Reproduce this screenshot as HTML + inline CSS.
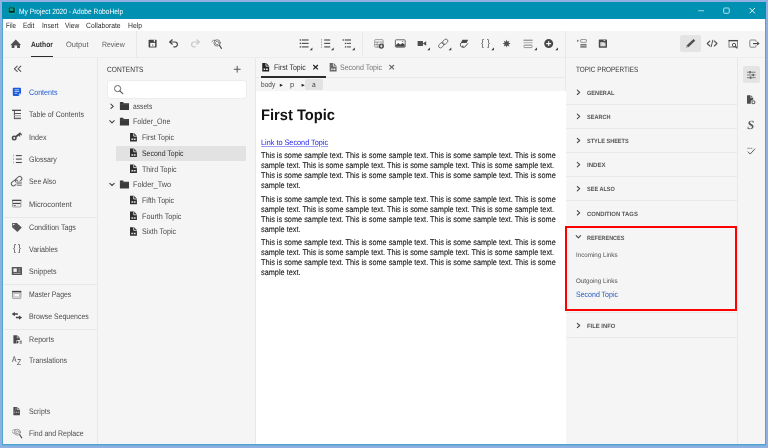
<!DOCTYPE html>
<html lang="en"><head><meta charset="utf-8"><title>My Project 2020 - Adobe RoboHelp</title>
<style>
html,body{margin:0;padding:0;}
body{width:768px;height:448px;overflow:hidden;background:#8fb0e2;font-family:"Liberation Sans",sans-serif;font-size:8px;color:#4b4b4b;position:relative;text-rendering:geometricPrecision;}
div,span,a{position:absolute;white-space:nowrap;}
#win{left:2px;top:2px;width:764px;height:443px;background:#4ea5cd;border-bottom:1px solid #70aad8;}
#title{left:2px;top:2px;width:764px;height:17px;background:#0090b2;}
#menu{left:3px;top:19px;width:762px;height:12px;background:#fff;}
#tool{left:3px;top:31px;width:762px;height:26px;background:#f5f5f5;}
#main{left:3px;top:57px;width:762px;height:387px;background:#f5f5f5;}
.vl{background:#e8e8e8;width:1px;}
.hl{background:#e9e9e9;height:1px;}
svg{position:absolute;overflow:visible;}
#ed{left:256.3px;top:91.3px;width:310px;height:352.7px;background:#fff;}
.p{white-space:nowrap;font-size:8.2px;line-height:10px;color:#141414;transform-origin:0 0;-webkit-text-stroke:0.1px #141414;}
#app{left:0;top:0;width:768px;height:448px;background:#8fb0e2;will-change:transform;}
</style></head><body>
<div id="app">
<div id="win"></div>
<div id="title"></div>
<div id="menu"></div>
<div id="tool"></div>
<div id="main"></div>

<span style="left:18.90px;top:6.75px;font-size:7.7px;line-height:10px;color:#ffffff;transform:scaleX(0.8641);transform-origin:0 0;">My Project 2020 - Adobe RoboHelp</span>
<span style="left:6.00px;top:20.75px;font-size:7.6px;line-height:10px;color:#2a2a2a;transform:scaleX(0.8165);transform-origin:0 0;">File</span>
<span style="left:23.00px;top:20.75px;font-size:7.6px;line-height:10px;color:#2a2a2a;transform:scaleX(0.8552);transform-origin:0 0;">Edit</span>
<span style="left:41.50px;top:20.75px;font-size:7.6px;line-height:10px;color:#2a2a2a;transform:scaleX(0.8681);transform-origin:0 0;">Insert</span>
<span style="left:65.00px;top:20.75px;font-size:7.6px;line-height:10px;color:#2a2a2a;transform:scaleX(0.8692);transform-origin:0 0;">View</span>
<span style="left:86.20px;top:20.75px;font-size:7.6px;line-height:10px;color:#2a2a2a;transform:scaleX(0.8902);transform-origin:0 0;">Collaborate</span>
<span style="left:127.80px;top:20.75px;font-size:7.6px;line-height:10px;color:#2a2a2a;transform:scaleX(0.8957);transform-origin:0 0;">Help</span>
<span style="left:31.00px;top:39.75px;font-size:7.8px;line-height:10px;color:#2c2c2c;transform:scaleX(0.8529);transform-origin:0 0;font-weight:bold;">Author</span>
<div style="left:31px;top:55.7px;width:21.6px;height:1.4px;background:#2c2c2c"></div>
<span style="left:66.20px;top:39.75px;font-size:7.8px;line-height:10px;color:#606060;transform:scaleX(0.9609);transform-origin:0 0;">Output</span>
<span style="left:102.30px;top:39.75px;font-size:7.8px;line-height:10px;color:#606060;transform:scaleX(0.8876);transform-origin:0 0;">Review</span>
<div class="vl" style="left:136px;top:31px;height:26px"></div>
<div class="vl" style="left:362px;top:33px;height:22px"></div>
<div class="vl" style="left:565.3px;top:31px;height:413px"></div>
<div style="left:680px;top:35px;width:20.8px;height:17.2px;background:#e4e4e4;border-radius:2px"></div>

<div class="vl" style="left:97.3px;top:57px;height:387px"></div>
<div class="vl" style="left:255.3px;top:57px;height:387px"></div>
<div class="vl" style="left:737.2px;top:57px;height:387px"></div>
<div class="hl" style="left:256.3px;top:77.3px;width:309px"></div>
<div class="hl" style="left:3px;top:57px;width:762px;background:#ececec"></div>

<span style="left:28.60px;top:87.75px;font-size:8px;line-height:10px;color:#1c5ad0;transform:scaleX(0.8932);transform-origin:0 0;">Contents</span>
<span style="left:28.60px;top:109.75px;font-size:8px;line-height:10px;color:#4c4c4c;transform:scaleX(0.8834);transform-origin:0 0;">Table of Contents</span>
<span style="left:28.60px;top:132.75px;font-size:8px;line-height:10px;color:#4c4c4c;transform:scaleX(0.8942);transform-origin:0 0;">Index</span>
<span style="left:28.60px;top:154.75px;font-size:8px;line-height:10px;color:#4c4c4c;transform:scaleX(0.8808);transform-origin:0 0;">Glossary</span>
<span style="left:28.60px;top:176.75px;font-size:8px;line-height:10px;color:#4c4c4c;transform:scaleX(0.8582);transform-origin:0 0;">See Also</span>
<span style="left:28.60px;top:199.75px;font-size:8px;line-height:10px;color:#4c4c4c;transform:scaleX(0.9345);transform-origin:0 0;">Microcontent</span>
<span style="left:28.60px;top:222.75px;font-size:8px;line-height:10px;color:#4c4c4c;transform:scaleX(0.8886);transform-origin:0 0;">Condition Tags</span>
<span style="left:28.60px;top:244.75px;font-size:8px;line-height:10px;color:#4c4c4c;transform:scaleX(0.8822);transform-origin:0 0;">Variables</span>
<span style="left:28.60px;top:266.75px;font-size:8px;line-height:10px;color:#4c4c4c;transform:scaleX(0.8865);transform-origin:0 0;">Snippets</span>
<span style="left:28.60px;top:289.75px;font-size:8px;line-height:10px;color:#4c4c4c;transform:scaleX(0.8550);transform-origin:0 0;">Master Pages</span>
<span style="left:28.60px;top:311.75px;font-size:8px;line-height:10px;color:#4c4c4c;transform:scaleX(0.8661);transform-origin:0 0;">Browse Sequences</span>
<span style="left:28.60px;top:334.75px;font-size:8px;line-height:10px;color:#4c4c4c;transform:scaleX(0.8925);transform-origin:0 0;">Reports</span>
<span style="left:28.60px;top:355.75px;font-size:8px;line-height:10px;color:#4c4c4c;transform:scaleX(0.8803);transform-origin:0 0;">Translations</span>
<span style="left:28.60px;top:406.75px;font-size:8px;line-height:10px;color:#4c4c4c;transform:scaleX(0.8630);transform-origin:0 0;">Scripts</span>
<span style="left:28.60px;top:428.75px;font-size:8px;line-height:10px;color:#4c4c4c;transform:scaleX(0.8707);transform-origin:0 0;">Find and Replace</span>
<div class="hl" style="left:3px;top:217.2px;width:94px"></div>
<div class="hl" style="left:3px;top:284.2px;width:94px"></div>
<div class="hl" style="left:3px;top:329px;width:94px"></div>
<span style="left:107.40px;top:64.75px;font-size:7.7px;line-height:10px;color:#333;transform:scaleX(0.8595);transform-origin:0 0;">CONTENTS</span>
<div style="left:107.5px;top:81px;width:138px;height:17px;background:#fff;border-radius:2.5px;box-shadow:0 0 0 0.6px #e6e6e6"></div>
<div style="left:116px;top:146.3px;width:129.6px;height:14.8px;background:#e2e2e2"></div>

<span style="left:133.00px;top:101.75px;font-size:8px;line-height:10px;color:#484848;transform:scaleX(0.8347);transform-origin:0 0;">assets</span>
<span style="left:133.00px;top:116.75px;font-size:8px;line-height:10px;color:#484848;transform:scaleX(0.8876);transform-origin:0 0;">Folder_One</span>
<span style="left:142.40px;top:132.75px;font-size:8px;line-height:10px;color:#484848;transform:scaleX(0.8787);transform-origin:0 0;">First Topic</span>
<span style="left:142.40px;top:148.75px;font-size:8px;line-height:10px;color:#2c2c2c;transform:scaleX(0.8666);transform-origin:0 0;">Second Topic</span>
<span style="left:142.40px;top:164.75px;font-size:8px;line-height:10px;color:#484848;transform:scaleX(0.8876);transform-origin:0 0;">Third Topic</span>
<span style="left:133.00px;top:179.75px;font-size:8px;line-height:10px;color:#484848;transform:scaleX(0.9091);transform-origin:0 0;">Folder_Two</span>
<span style="left:142.40px;top:195.75px;font-size:8px;line-height:10px;color:#484848;transform:scaleX(0.8840);transform-origin:0 0;">Fifth Topic</span>
<span style="left:142.40px;top:211.75px;font-size:8px;line-height:10px;color:#484848;transform:scaleX(0.8980);transform-origin:0 0;">Fourth Topic</span>
<span style="left:142.40px;top:226.75px;font-size:8px;line-height:10px;color:#484848;transform:scaleX(0.8822);transform-origin:0 0;">Sixth Topic</span>
<span style="left:273.50px;top:62.75px;font-size:8px;line-height:10px;color:#2c2c2c;transform:scaleX(0.8731);transform-origin:0 0;">First Topic</span>
<div style="left:260.8px;top:76px;width:65.2px;height:1.6px;background:#2c2c2c"></div>
<span style="left:339.60px;top:62.75px;font-size:8px;line-height:10px;color:#777777;transform:scaleX(0.8791);transform-origin:0 0;">Second Topic</span>
<div style="left:305.2px;top:79px;width:17.7px;height:11.4px;background:#e2e2e2;border-radius:2px"></div>
<span style="left:260.80px;top:79.75px;font-size:7.6px;line-height:10px;color:#444;transform:scaleX(0.8616);transform-origin:0 0;">body</span>
<span style="left:290.20px;top:79.75px;font-size:7.6px;line-height:10px;color:#444;transform:scaleX(0.9936);transform-origin:0 0;">p</span>
<span style="left:312.30px;top:79.75px;font-size:7.6px;line-height:10px;color:#444;transform:scaleX(0.8753);transform-origin:0 0;">a</span>
<div id="ed"></div>
<span style="left:261.00px;top:110.75px;font-size:15.4px;line-height:10px;color:#111;transform:scaleX(0.9539);transform-origin:0 0;font-weight:bold;">First Topic</span>
<a style="left:260.80px;top:137.75px;font-size:7.8px;line-height:10px;color:#1a1ae8;transform:scaleX(0.9340);transform-origin:0 0;text-decoration:underline;text-decoration-color:rgba(60,60,240,0.5);">Link to Second Topic</a>
<div class="p" style="left:260.8px;top:150.75px;transform:scaleX(0.8947)">This is some sample text. This is some sample text. This is some sample text. This is some<br>sample text. This is some sample text. This is some sample text. This is some sample text.<br>This is some sample text. This is some sample text. This is some sample text. This is some<br>sample text.</div>
<div class="p" style="left:260.8px;top:194.75px;transform:scaleX(0.8947)">This is some sample text. This is some sample text. This is some sample text. This is some<br>sample text. This is some sample text. This is some sample text. This is some sample text.<br>This is some sample text. This is some sample text. This is some sample text. This is some<br>sample text.</div>
<div class="p" style="left:260.8px;top:237.75px;transform:scaleX(0.8947)">This is some sample text. This is some sample text. This is some sample text. This is some<br>sample text. This is some sample text. This is some sample text. This is some sample text.<br>This is some sample text. This is some sample text. This is some sample text. This is some<br>sample text.</div>
<span style="left:575.70px;top:64.75px;font-size:7.7px;line-height:10px;color:#333;transform:scaleX(0.8304);transform-origin:0 0;">TOPIC PROPERTIES</span>
<span style="left:586.80px;top:88.75px;font-size:6.1px;line-height:10px;color:#555;transform:scaleX(0.9187);transform-origin:0 0;font-weight:bold;">GENERAL</span>
<span style="left:586.80px;top:112.75px;font-size:6.1px;line-height:10px;color:#555;transform:scaleX(0.9162);transform-origin:0 0;font-weight:bold;">SEARCH</span>
<span style="left:586.80px;top:136.75px;font-size:6.1px;line-height:10px;color:#555;transform:scaleX(0.9113);transform-origin:0 0;font-weight:bold;">STYLE SHEETS</span>
<span style="left:586.80px;top:160.75px;font-size:6.1px;line-height:10px;color:#555;transform:scaleX(1.0031);transform-origin:0 0;font-weight:bold;">INDEX</span>
<span style="left:586.80px;top:184.75px;font-size:6.1px;line-height:10px;color:#555;transform:scaleX(0.9112);transform-origin:0 0;font-weight:bold;">SEE ALSO</span>
<span style="left:586.80px;top:209.75px;font-size:6.1px;line-height:10px;color:#555;transform:scaleX(0.9711);transform-origin:0 0;font-weight:bold;">CONDITION TAGS</span>
<span style="left:586.80px;top:233.75px;font-size:6.1px;line-height:10px;color:#555;transform:scaleX(0.8971);transform-origin:0 0;font-weight:bold;">REFERENCES</span>
<span style="left:586.80px;top:321.75px;font-size:6.1px;line-height:10px;color:#555;transform:scaleX(0.9599);transform-origin:0 0;font-weight:bold;">FILE INFO</span>
<div class="hl" style="left:566.3px;top:104.3px;width:171px"></div>
<div class="hl" style="left:566.3px;top:128.3px;width:171px"></div>
<div class="hl" style="left:566.3px;top:152.3px;width:171px"></div>
<div class="hl" style="left:566.3px;top:176.3px;width:171px"></div>
<div class="hl" style="left:566.3px;top:200.4px;width:171px"></div>
<div class="hl" style="left:566.3px;top:312.2px;width:171px"></div>
<div class="hl" style="left:566.3px;top:336.6px;width:171px"></div>
<span style="left:575.70px;top:250.75px;font-size:6.5px;line-height:10px;color:#505050;transform:scaleX(0.9572);transform-origin:0 0;">Incoming Links</span>
<span style="left:575.70px;top:276.75px;font-size:6.5px;line-height:10px;color:#505050;transform:scaleX(0.9571);transform-origin:0 0;">Outgoing Links</span>
<span style="left:575.70px;top:289.75px;font-size:7.8px;line-height:10px;color:#2257c2;transform:scaleX(0.8995);transform-origin:0 0;">Second Topic</span>
<div style="left:565.3px;top:225.5px;width:167.7px;height:81.5px;border:2px solid #ff0000"></div>
<div style="left:742.8px;top:66.3px;width:16.8px;height:16.7px;background:#e4e4e4;border-radius:2px"></div>

<svg style="left:0;top:0" width="768" height="448" viewBox="0 0 768 448" fill="none">
<rect x="7.9" y="6.9" width="7.6" height="6.6" rx="1.2" fill="#0bb5a3"/><rect x="8.7" y="7.6" width="6" height="5.2" rx="0.5" fill="#012a27"/><rect x="9.6" y="8.3" width="3.8" height="2.5" fill="#17a595"/>
<path d="M698.2 10.7h5.9" stroke="#8fd3e2" stroke-width="1.1"/><rect x="723.7" y="8" width="5.5" height="5.3" rx="0.7" stroke="#b4e2ed" stroke-width="1"/><path d="M749.6 8l5.3 5.3M754.9 8l-5.3 5.3" stroke="#f2fbfd" stroke-width="1"/>
<path d="M15.75 39.4L21 44.9H19.9V48H17.1V45.5H14.4V48H11.7V44.9H10.5Z" fill="#4f4f4f"/>
<rect x="148.6" y="39.8" width="8" height="7.7" rx="0.7" fill="#444"/><rect x="150.2" y="42.9" width="4.9" height="3.7" fill="#f5f5f5"/><rect x="153.8" y="39.6" width="1.2" height="2.1" fill="#f5f5f5"/><rect x="152" y="44.4" width="1.3" height="2.2" fill="#999"/>
<g stroke="#444" stroke-width="1.2" stroke-linecap="round" stroke-linejoin="round"><path d="M170 42H175a2.4 2.4 0 0 1 0 4.8H173.8"/><path d="M172.2 39.8L169.8 42L172.2 44.2" /></g>
<g stroke="#c8c8c8" stroke-width="1.2" stroke-linecap="round" stroke-linejoin="round"><path d="M199 42H194a2.4 2.4 0 0 0 0 4.8H195.2"/><path d="M196.8 39.8L199.2 42L196.8 44.2" /></g>
<g stroke="#6a6a6a" stroke-width="0.8" stroke-linecap="round"><circle cx="217.1" cy="42.9" r="3.2"/><path d="M219.5 45.4L221.4 48.4" stroke-width="1.15" stroke="#505050"/><path d="M215.3 43.8a1.9 1.9 0 0 1 3.3-1.8M218.9 42.2a1.9 1.9 0 0 1-3.2 1.9" stroke-width="0.8"/><path d="M212 41.5l1.5-1.3 1.8 0.3" stroke-width="0.8"/></g>
<rect x="299.7" y="39.35" width="1.3" height="1.3" fill="#444"/><rect x="301.7" y="39.4" width="6.9" height="1.2" fill="#555"/>
<rect x="324.2" y="39.4" width="6" height="1.2" fill="#555"/>
<rect x="299.7" y="42.75" width="1.3" height="1.3" fill="#444"/><rect x="301.7" y="42.8" width="6.9" height="1.2" fill="#555"/>
<rect x="324.2" y="42.8" width="6" height="1.2" fill="#555"/>
<rect x="299.7" y="46.25" width="1.3" height="1.3" fill="#444"/><rect x="301.7" y="46.3" width="6.9" height="1.2" fill="#555"/>
<rect x="324.2" y="46.3" width="6" height="1.2" fill="#555"/>
<path d="M321.5 39V48" stroke="#999" stroke-width="0.8" stroke-dasharray="1.6 0.9"/>
<rect x="342.6" y="39.35" width="1.3" height="1.3" fill="#444"/><rect x="344.7" y="39.4" width="6.3" height="1.2" fill="#555"/>
<rect x="344.9" y="42.75" width="1.3" height="1.3" fill="#444"/><rect x="346.9" y="42.8" width="4.1" height="1.2" fill="#666"/>
<rect x="344.9" y="46.25" width="1.3" height="1.3" fill="#444"/><rect x="346.9" y="46.3" width="4.1" height="1.2" fill="#666"/>
<path d="M312.4 50.2H309.7L312.4 47.5Z" fill="#3c3c3c"/>
<path d="M333.7 50.2H331.0L333.7 47.5Z" fill="#3c3c3c"/>
<path d="M354.8 50.2H352.1L354.8 47.5Z" fill="#3c3c3c"/>
<g stroke="#8a8a8a" stroke-width="0.8"><rect x="374.7" y="39.6" width="8.4" height="7.6" rx="0.8"/><path d="M374.7 42.1H383M377.2 42.1V47.2M374.7 44.6H379"/></g><circle cx="381.3" cy="46.1" r="2.6" fill="#444"/><path d="M379.9 46.1h2.8M381.3 44.7v2.8" stroke="#fff" stroke-width="0.8"/>
<rect x="395.4" y="39.8" width="9.8" height="7.4" rx="0.7" stroke="#505050" stroke-width="0.85" fill="#fbfbfb"/><path d="M395.9 46.7V44.9L398.3 42.9L400.2 44.6L402.6 43L404.7 44.4V46.7Z" fill="#484848"/><rect x="402.2" y="41" width="1.2" height="0.9" fill="#666"/>
<rect x="417.6" y="41" width="5.4" height="5" rx="0.5" fill="#4f4f4f"/><path d="M422.8 43.5L426.2 41.3V45.7Z" fill="#4f4f4f"/>
<path d="M430 50.2H427.3L430 47.5Z" fill="#3c3c3c"/>
<g stroke="#6c6c6c" stroke-width="0.9" transform="rotate(-42 443.2 43.5)"><rect x="437.6" y="41.6" width="6.2" height="3.8" rx="1.9"/><rect x="442.6" y="41.6" width="6.2" height="3.8" rx="1.9"/></g>
<path d="M451.3 50.2H448.6L451.3 47.5Z" fill="#3c3c3c"/>
<path d="M462.4 39.8H468.2L466.6 43H460.7Z" fill="#4a4a4a"/><path d="M460.9 43C459.8 45 460.6 47.2 462.6 47.2H464.6L468 43.4" stroke="#4a4a4a" stroke-width="1" stroke-linejoin="round"/><path d="M462.8 47.2V45.6" stroke="#4a4a4a" stroke-width="0.9"/>
<path d="M494 50.2H491.3L494 47.5Z" fill="#3c3c3c"/>
<polygon points="506.60,39.60 507.40,41.66 509.43,40.77 508.54,42.80 510.60,43.60 508.54,44.40 509.43,46.43 507.40,45.54 506.60,47.60 505.80,45.54 503.77,46.43 504.66,44.40 502.60,43.60 504.66,42.80 503.77,40.77 505.80,41.66" fill="#4f4f4f"/>
<rect x="523.5" y="39.7" width="9.1" height="1" fill="#777"/><rect x="523.5" y="42.1" width="9.1" height="0.8" fill="#aaa"/><rect x="523.5" y="43.4" width="9.1" height="1.6" fill="#e0e0e0"/><rect x="523.9" y="45.3" width="8.3" height="2.3" rx="1" stroke="#777" stroke-width="0.8" fill="#fff"/>
<path d="M537 50.2H534.3L537 47.5Z" fill="#3c3c3c"/>
<circle cx="548.7" cy="43.6" r="4.5" fill="#484848"/><path d="M546.3 43.6h4.8M548.7 41.2v4.8" stroke="#fff" stroke-width="1.1"/>
<path d="M558 50.2H555.3L558 47.5Z" fill="#3c3c3c"/>
<path d="M577.2 39.5L578.9 40.7L577.2 42Z" fill="#555"/><rect x="580.7" y="39.6" width="5.6" height="2.7" rx="0.3" stroke="#777" stroke-width="0.8" fill="#fff"/><rect x="580.3" y="44.1" width="6.3" height="1.4" fill="#666"/><rect x="580.3" y="46.2" width="6.3" height="1.4" fill="#666"/>
<rect x="598.8" y="39.4" width="8.2" height="8.3" rx="0.6" fill="#4a4a4a"/><rect x="600.3" y="42.2" width="5.3" height="4.1" fill="#dcdcdc"/><rect x="603.6" y="40" width="1.6" height="0.9" fill="#ddd"/><path d="M604 42.2h1.6v1.6z" fill="#4a4a4a"/>
<g transform="rotate(-43 690.4 43.6)"><rect x="686.4" y="42.35" width="9.4" height="2.5" fill="#4f4f4f"/><path d="M686.4 42.35L684.3 43.6L686.4 44.85Z" fill="#9a9a9a"/></g>
<g stroke="#555" stroke-width="1.1" stroke-linecap="round" stroke-linejoin="round"><path d="M709.9 41L707.2 43.5L709.9 46"/><path d="M714.3 41L717 43.5L714.3 46"/><path d="M712.8 40.2L711.2 46.7" stroke-width="1"/></g>
<rect x="729" y="40.4" width="8.4" height="6.7" stroke="#777" stroke-width="0.9"/><rect x="728.6" y="40" width="9.2" height="1.3" fill="#444"/><circle cx="734" cy="45" r="1.7" stroke="#444" stroke-width="0.9" fill="#f5f5f5"/><path d="M735.3 46.3L737.3 48.4" stroke="#444" stroke-width="1.1"/>
<path d="M756 42V40.9Q756 40 755.1 40H750.7Q749.8 40 749.8 40.9V46.3Q749.8 47.2 750.7 47.2H755.1Q756 47.2 756 46.3V45.2" stroke="#7a7a7a" stroke-width="0.9"/><path d="M753 43.6H758" stroke="#444" stroke-width="1.1"/><path d="M757.2 41.6L759.6 43.6L757.2 45.6Z" fill="#444"/>
<g stroke="#555" stroke-width="1.1" stroke-linecap="round" stroke-linejoin="round"><path d="M17.2 66.2L14.4 68.8L17.2 71.4"/><path d="M20.8 66.2L18 68.8L20.8 71.4"/></g>
<path d="M13.6 87.8H20.2Q21 87.8 21 88.6V93.6L18.8 95.9H13.6Q12.8 95.9 12.8 95.1V88.6Q12.8 87.8 13.6 87.8Z" fill="#1b5bd8"/><path d="M14.6 89.8h4.6M14.6 91.5h4.6M14.6 93.3h2.6" stroke="#cfe0ff" stroke-width="0.8"/><path d="M18.8 95.9V94.2Q18.8 93.6 19.4 93.6H21Z" fill="#cfe0ff"/>
<g><rect x="12.1" y="109.7" width="8.9" height="1.2" fill="#3c3c3c"/><rect x="13.9" y="110" width="0.9" height="9.1" fill="#444"/><rect x="14.3" y="113" width="6.7" height="0.9" fill="#444"/><rect x="14.3" y="115.3" width="6.7" height="0.7" fill="#999"/><rect x="14.3" y="116.8" width="6.7" height="0.7" fill="#999"/><rect x="14.3" y="118.2" width="6.7" height="0.9" fill="#444"/></g>
<g><circle cx="14.2" cy="138.1" r="1.75" stroke="#4a4a4a" stroke-width="1.5"/><path d="M15.8 136.7L20.7 133" stroke="#4a4a4a" stroke-width="1.8"/><path d="M18.9 134.8l1.2 1.5M20.4 133.6l1.3 1.6" stroke="#4a4a4a" stroke-width="1.1"/></g>
<rect x="15.9" y="155.04999999999998" width="5.9" height="1.1" fill="#4a4a4a"/><rect x="13" y="154.7" width="0.9" height="1.8" fill="#aaa"/>
<rect x="15.9" y="158.54999999999998" width="5.9" height="1.1" fill="#4a4a4a"/><rect x="13" y="158.2" width="0.9" height="1.8" fill="#aaa"/>
<rect x="15.9" y="161.95" width="5.9" height="1.1" fill="#4a4a4a"/><rect x="13" y="161.6" width="0.9" height="1.8" fill="#aaa"/>
<g stroke="#606060" stroke-width="1" transform="rotate(-40 16.6 181.2)"><rect x="10.4" y="179.1" width="7.2" height="4.2" rx="2.1"/><rect x="15.6" y="179.1" width="7.2" height="4.2" rx="2.1"/></g>
<rect x="16.4" y="181.3" width="5.8" height="4.6" fill="#f5f5f5"/>
<rect x="16.8" y="181.75" width="5" height="0.9" fill="#777"/>
<rect x="16.8" y="183.35000000000002" width="5" height="0.9" fill="#777"/>
<rect x="16.8" y="184.85000000000002" width="5" height="0.9" fill="#777"/>
<rect x="12.5" y="200.2" width="8.4" height="6.8" rx="0.6" stroke="#8a8a8a" stroke-width="0.8" fill="#ececec"/><rect x="12.1" y="199.8" width="9.2" height="1.3" fill="#4a4a4a"/><rect x="13" y="201.2" width="7.4" height="1.4" fill="#fafafa"/><rect x="13" y="202.8" width="7.4" height="1.2" fill="#4a4a4a"/><rect x="13.6" y="205.1" width="2.2" height="0.8" fill="#555"/>
<path d="M12.1 222.9H16.8L21.8 227.6L17.4 232L12.1 227.2Z" fill="#555"/><circle cx="13.8" cy="224.5" r="0.8" fill="#f5f5f5"/>
<rect x="11.8" y="267" width="10.2" height="8" rx="0.6" fill="#555"/><rect x="13.4" y="268.4" width="3.4" height="3.5" fill="#f2f2f2"/><path d="M18.4 268.8h2M18.4 270.2h2M18.4 271.6h2" stroke="#aaa" stroke-width="0.7"/><path d="M13.4 273.4h7.2" stroke="#bbb" stroke-width="0.8"/>
<rect x="12.5" y="291.4" width="8.4" height="7" rx="0.5" stroke="#8a8a8a" stroke-width="0.8" fill="#f0f0f0"/><rect x="12.1" y="290.9" width="9.2" height="1.5" fill="#444"/><rect x="13.9" y="293.6" width="5.6" height="3.3" stroke="#aaa" stroke-width="0.7" fill="#fafafa"/>
<path d="M11.7 314.1L14.8 311.9V313.35H17.9V314.85H14.8V316.3Z" fill="#444"/><path d="M22.1 317.6L19 315.4V316.85H15.9V318.35H19V319.8Z" fill="#444"/>
<path d="M13.4 335.2H17.3L19.9 337.8V343.6H13.4Z" fill="#4a4a4a"/><path d="M17.3 335.2V337.8H19.9" stroke="#f5f5f5" stroke-width="0.6"/><rect x="16.6" y="340" width="5.6" height="4.2" fill="#f5f5f5"/><path d="M17 340.4l2 1.7l-2 1.7z" fill="#444"/><path d="M19.6 341.2h2.3M19.6 343h2.3" stroke="#444" stroke-width="0.9"/>
<path d="M13.4 406.9H17.3L19.9 409.5V415.3H13.4Z" fill="#4a4a4a"/><path d="M17.3 406.9V409.5H19.9" stroke="#f5f5f5" stroke-width="0.6"/><path d="M14.2 412.3h5" stroke="#c8c8c8" stroke-width="1.1" stroke-dasharray="1.1 0.7"/><path d="M15.2 408.3h1.2M15.2 409.8h1.2" stroke="#bbb" stroke-width="0.6"/>
<g stroke="#808080" stroke-width="0.75" stroke-linecap="round"><circle cx="17.4" cy="432.2" r="3"/><path d="M19.6 434.6L21.8 437.9" stroke-width="1.1" stroke="#555"/><path d="M15.8 433a1.8 1.8 0 0 1 3-1.7M19 431.6a1.8 1.8 0 0 1-2.9 1.7" stroke-width="0.7"/><path d="M12.3 431l1.3-1.4 1.8 0.2M12.6 432.6l1.4 0.9" stroke-width="0.8"/></g>
<path d="M233.8 69.25h6.8M237.2 65.9v6.7" stroke="#555" stroke-width="1"/>
<circle cx="117.6" cy="88.6" r="3.1" stroke="#555" stroke-width="0.9"/><path d="M119.9 91L122.8 93.7" stroke="#555" stroke-width="1.1" stroke-linecap="round"/>
<path d="M110.9 104.14999999999999L113.30000000000001 106.3L110.9 108.45" stroke="#444" stroke-width="1.1" stroke-linecap="round" stroke-linejoin="round"/>
<path d="M119.9 102.0H123.10000000000001L123.80000000000001 103.2H129.0V109.9H119.9Z" fill="#3a3a3a"/><path d="M120.2 104.3H128.70000000000002" stroke="#5a5a5a" stroke-width="0.5"/>
<path d="M109.8 120.7L112 122.8L114.2 120.7" stroke="#444" stroke-width="1.1" stroke-linecap="round" stroke-linejoin="round"/>
<path d="M119.9 117.7H123.10000000000001L123.80000000000001 118.9H129.0V125.60000000000001H119.9Z" fill="#3a3a3a"/><path d="M120.2 120.0H128.70000000000002" stroke="#5a5a5a" stroke-width="0.5"/>
<path d="M109.8 183.4L112 185.5L114.2 183.4" stroke="#444" stroke-width="1.1" stroke-linecap="round" stroke-linejoin="round"/>
<path d="M119.9 180.5H123.10000000000001L123.80000000000001 181.7H129.0V188.4H119.9Z" fill="#3a3a3a"/><path d="M120.2 182.8H128.70000000000002" stroke="#5a5a5a" stroke-width="0.5"/>
<path d="M130 133.0H134L136.9 135.9V141.5H130Z" fill="#2e2e2e"/><path d="M133.7 133.2V136.2H136.8" stroke="#f5f5f5" stroke-width="0.8"/><path d="M131.4 139.3h1.5M133.7 139.3h1.9" stroke="#e8e8e8" stroke-width="1.5"/>
<path d="M130 148.60000000000002H134L136.9 151.50000000000003V157.10000000000002H130Z" fill="#2e2e2e"/><path d="M133.7 148.8V151.8H136.8" stroke="#e2e2e2" stroke-width="0.8"/><path d="M131.4 154.90000000000003h1.5M133.7 154.90000000000003h1.9" stroke="#e8e8e8" stroke-width="1.5"/>
<path d="M130 164.4H134L136.9 167.3V172.9H130Z" fill="#2e2e2e"/><path d="M133.7 164.6V167.6H136.8" stroke="#f5f5f5" stroke-width="0.8"/><path d="M131.4 170.70000000000002h1.5M133.7 170.70000000000002h1.9" stroke="#e8e8e8" stroke-width="1.5"/>
<path d="M130 195.8H134L136.9 198.70000000000002V204.3H130Z" fill="#2e2e2e"/><path d="M133.7 196.0V199.0H136.8" stroke="#f5f5f5" stroke-width="0.8"/><path d="M131.4 202.10000000000002h1.5M133.7 202.10000000000002h1.9" stroke="#e8e8e8" stroke-width="1.5"/>
<path d="M130 211.60000000000002H134L136.9 214.50000000000003V220.10000000000002H130Z" fill="#2e2e2e"/><path d="M133.7 211.8V214.8H136.8" stroke="#f5f5f5" stroke-width="0.8"/><path d="M131.4 217.90000000000003h1.5M133.7 217.90000000000003h1.9" stroke="#e8e8e8" stroke-width="1.5"/>
<path d="M130 227.20000000000002H134L136.9 230.10000000000002V235.70000000000002H130Z" fill="#2e2e2e"/><path d="M133.7 227.4V230.4H136.8" stroke="#f5f5f5" stroke-width="0.8"/><path d="M131.4 233.50000000000003h1.5M133.7 233.50000000000003h1.9" stroke="#e8e8e8" stroke-width="1.5"/>
<path d="M262.25 63.0H266.25L269.15 65.9V71.5H262.25Z" fill="#222"/><path d="M265.95 63.2V66.2H269.05" stroke="#f5f5f5" stroke-width="0.8"/><path d="M263.65 69.3h1.5M265.95 69.3h1.9" stroke="#e8e8e8" stroke-width="1.5"/>
<path d="M329.7 63.0H333.7L336.59999999999997 65.9V71.5H329.7Z" fill="#6a6a6a"/><path d="M333.4 63.2V66.2H336.5" stroke="#f5f5f5" stroke-width="0.8"/><path d="M331.09999999999997 69.3h1.5M333.4 69.3h1.9" stroke="#e8e8e8" stroke-width="1.5"/>
<path d="M313.3 65l4.6 4.4M317.9 65l-4.6 4.4" stroke="#222" stroke-width="1.2"/>
<path d="M389.4 65l4.6 4.4M394 65l-4.6 4.4" stroke="#666" stroke-width="1.1"/>
<path d="M279.8 83.7L283 85.2L279.8 86.7Z" fill="#222"/><path d="M301.6 83.7L304.8 85.2L301.6 86.7Z" fill="#222"/>
<path d="M577.3 90.1L579.6999999999999 92.3L577.3 94.5" stroke="#484848" stroke-width="1.1" stroke-linecap="round" stroke-linejoin="round"/>
<path d="M577.3 114.2L579.6999999999999 116.4L577.3 118.60000000000001" stroke="#484848" stroke-width="1.1" stroke-linecap="round" stroke-linejoin="round"/>
<path d="M577.3 138.3L579.6999999999999 140.5L577.3 142.7" stroke="#484848" stroke-width="1.1" stroke-linecap="round" stroke-linejoin="round"/>
<path d="M577.3 162.4L579.6999999999999 164.6L577.3 166.79999999999998" stroke="#484848" stroke-width="1.1" stroke-linecap="round" stroke-linejoin="round"/>
<path d="M577.3 186.5L579.6999999999999 188.7L577.3 190.89999999999998" stroke="#484848" stroke-width="1.1" stroke-linecap="round" stroke-linejoin="round"/>
<path d="M577.3 210.60000000000002L579.6999999999999 212.8L577.3 215.0" stroke="#484848" stroke-width="1.1" stroke-linecap="round" stroke-linejoin="round"/>
<path d="M577.3 323.3L579.6999999999999 325.5L577.3 327.7" stroke="#484848" stroke-width="1.1" stroke-linecap="round" stroke-linejoin="round"/>
<path d="M576.2 235.6L578.4 237.9L580.6 235.6" stroke="#484848" stroke-width="1.1" stroke-linecap="round" stroke-linejoin="round"/>
<rect x="747" y="71.75" width="8.6" height="0.9" fill="#777"/><rect x="749.2" y="71.0" width="1.6" height="2.4" fill="#666"/>
<rect x="747" y="74.55" width="8.6" height="0.9" fill="#777"/><rect x="752.4000000000001" y="73.8" width="1.6" height="2.4" fill="#666"/>
<rect x="747" y="77.25" width="8.6" height="0.9" fill="#777"/><rect x="749.8000000000001" y="76.5" width="1.6" height="2.4" fill="#666"/>
<path d="M747 95.2H750.8L753.2 97.6V103.8H747Z" fill="#4f4f4f"/><path d="M750.8 95.2V97.6H753.2" stroke="#f5f5f5" stroke-width="0.6"/><circle cx="753.4" cy="102.3" r="2.6" fill="#f5f5f5"/><circle cx="753.4" cy="102.3" r="1.5" stroke="#606060" stroke-width="1.1" fill="#fff"/>
<path d="M748.1 151.9L750.2 154.1L754.8 149" stroke="#5a5a5a" stroke-width="1" stroke-linecap="round" stroke-linejoin="round"/><path d="M747.4 148.4h5" stroke="#999" stroke-width="1.1" stroke-dasharray="1.3 0.5"/>
</svg>
<span style="left:12.60px;top:243.75px;font-size:9.6px;line-height:10px;color:#484848;transform:scaleX(0.9357);transform-origin:0 0;">{</span>
<span style="left:17.90px;top:243.75px;font-size:9.6px;line-height:10px;color:#484848;transform:scaleX(0.9357);transform-origin:0 0;">}</span>
<span style="left:481.00px;top:38.75px;font-size:9.6px;line-height:10px;color:#505050;transform:scaleX(0.9357);transform-origin:0 0;">{</span>
<span style="left:486.90px;top:38.75px;font-size:9.6px;line-height:10px;color:#505050;transform:scaleX(0.9357);transform-origin:0 0;">}</span>
<span style="left:12.10px;top:354.25px;font-size:8.3px;line-height:10px;color:#444;transform:scaleX(0.8128);transform-origin:0 0;">A</span>
<span style="left:17.10px;top:357.25px;font-size:8.3px;line-height:10px;color:#444;transform:scaleX(0.8284);transform-origin:0 0;">Z</span>
<span style="left:747.2px;top:116.8px;font-family:'Liberation Serif',serif;font-style:italic;font-weight:bold;font-size:12.6px;line-height:16px;color:#5a5a5a">S</span>
</div>
</body></html>
